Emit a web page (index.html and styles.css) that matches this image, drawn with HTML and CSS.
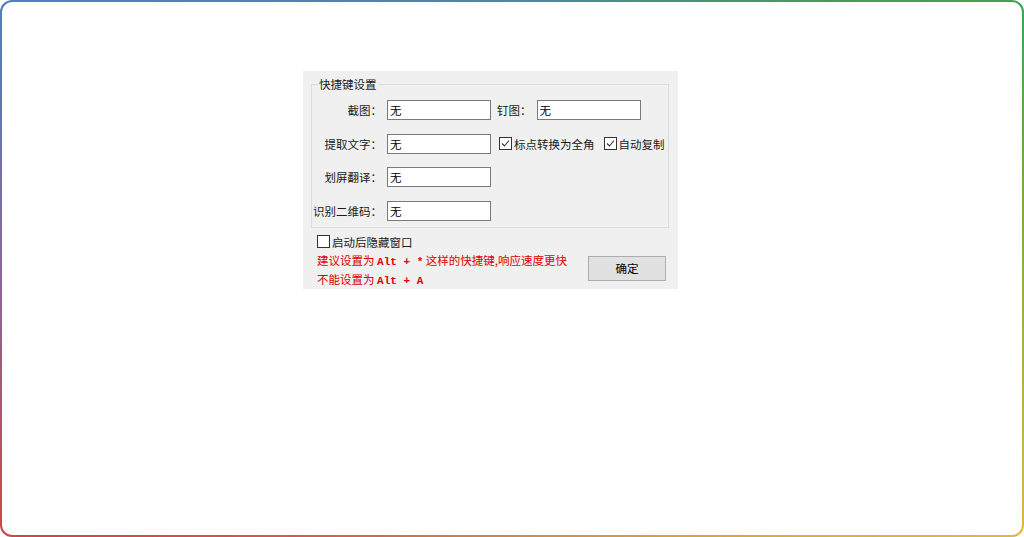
FILE: index.html
```html
<!DOCTYPE html>
<html lang="zh-CN">

<head>
    <meta charset="UTF-8">
    <meta name="viewport" content="width=device-width, initial-scale=1.0">
    <title>快捷键设置</title>
    <link rel="stylesheet" href="styles.css">
</head>

<body>

    <div class="frame">
        <div class="dialog">

            <!-- Hotkey group -->
            <fieldset class="group">
                <legend>快捷键设置</legend>

                <div class="row">
                    <span class="label">截图：</span>
                    <input class="field" type="text" value="无">
                    <span class="label small">钉图：</span>
                    <input class="field" type="text" value="无">
                </div>

                <div class="row">
                    <span class="label">提取文字：</span>
                    <input class="field" type="text" value="无">
                    <span class="check on">
                        <span class="box"><svg viewBox="0 0 11 11"><path d="M2 5.5 L4.5 8 L9 2.5"/></svg></span>标点转换为全角
                    </span>
                    <span class="check on">
                        <span class="box"><svg viewBox="0 0 11 11"><path d="M2 5.5 L4.5 8 L9 2.5"/></svg></span>自动复制
                    </span>
                </div>

                <div class="row">
                    <span class="label">划屏翻译：</span>
                    <input class="field" type="text" value="无">
                </div>

                <div class="row">
                    <span class="label">识别二维码：</span>
                    <input class="field" type="text" value="无">
                </div>
            </fieldset>

            <!-- Bottom area -->
            <div class="footer">
                <div class="notes">
                    <span class="check">
                        <span class="box"></span>启动后隐藏窗口
                    </span>
                    <p class="warn">建议设置为 <span class="key">Alt + *</span> 这样的快捷键,响应速度更快</p>
                    <p class="warn">不能设置为 <span class="key">Alt + A</span></p>
                </div>
                <button class="ok">确定</button>
            </div>

        </div>
    </div>

</body>

</html>
```

FILE: styles.css
```css
html, body {
    margin: 0;
    padding: 0;
    height: 100%;
    overflow: hidden;
}

body {
    font-family: "Noto Sans CJK SC", "Noto Sans", sans-serif;
    font-size: 11.5px;
    color: #1a1a1a;
}

/* Rounded frame with the four-colour border */
.frame {
    box-sizing: border-box;
    width: 100vw;
    height: 100vh;
    border: 2px solid transparent;
    border-radius: 12px;
    background:
        linear-gradient(#fff, #fff) padding-box,
        conic-gradient(#4a8aa3 0deg, #3fa34f 62deg, #8cae45 90deg, #e2b73d 118deg,
            #cf8a4a 180deg, #d04646 242deg, #8a66a0 270deg, #4a7fc6 298deg, #4a8aa3 360deg) border-box;
    padding: 69px 0 0 301px;
}

.dialog {
    box-sizing: border-box;
    width: 375px;
    height: 218px;
    background-color: #f0f0f0;
    padding: 5px 9px 0 8px;
}

/* Group box */
.group {
    margin: 0;
    min-width: 0;
    border: 1px solid #dcdcdc;
    padding: 8px 0 6px 0;
}

.group legend {
    margin-left: 5px;
    padding: 0 2px;
    line-height: 16px;
}

.row {
    display: flex;
    align-items: center;
    height: 20px;
    margin-bottom: 13.5px;
}

.row:last-child {
    margin-bottom: 0;
}

.label {
    width: 70px;
    text-align: right;
    margin-right: 5px;
    white-space: nowrap;
}

.label.small {
    width: auto;
    margin-left: 6px;
}

.field {
    box-sizing: border-box;
    width: 104px;
    height: 20px;
    border: 1px solid #7a7a7a;
    background: #fff;
    padding: 0 2px;
    font-family: inherit;
    font-size: 11.5px;
    color: #000;
    outline: none;
}

/* Check boxes */
.check {
    display: flex;
    align-items: center;
    white-space: nowrap;
}

.row .check {
    margin-left: 8px;
}

.row .check + .check {
    margin-left: 9px;
}

.box {
    box-sizing: border-box;
    width: 13px;
    height: 13px;
    border: 1px solid #333;
    background: #fff;
    margin-right: 2px;
    display: flex;
}

.box svg {
    width: 11px;
    height: 11px;
}

.box path {
    fill: none;
    stroke: #333;
    stroke-width: 1.1;
}

/* Footer */
.footer {
    display: flex;
    justify-content: space-between;
    padding-left: 6px;
    margin-top: 4px;
}

.notes .check {
    line-height: 20px;
}

.warn {
    margin: 0;
    color: #e00000;
    line-height: 17px;
    white-space: nowrap;
}

.key {
    font-family: "Liberation Mono", monospace;
    font-weight: bold;
    font-size: 11px;
}

.ok {
    width: 78px;
    height: 25px;
    margin-top: 24px;
    margin-right: 3px;
    background: #e1e1e1;
    border: 1px solid #adadad;
    font-family: inherit;
    font-size: 11.5px;
    color: #000;
    padding: 0;
}
```
